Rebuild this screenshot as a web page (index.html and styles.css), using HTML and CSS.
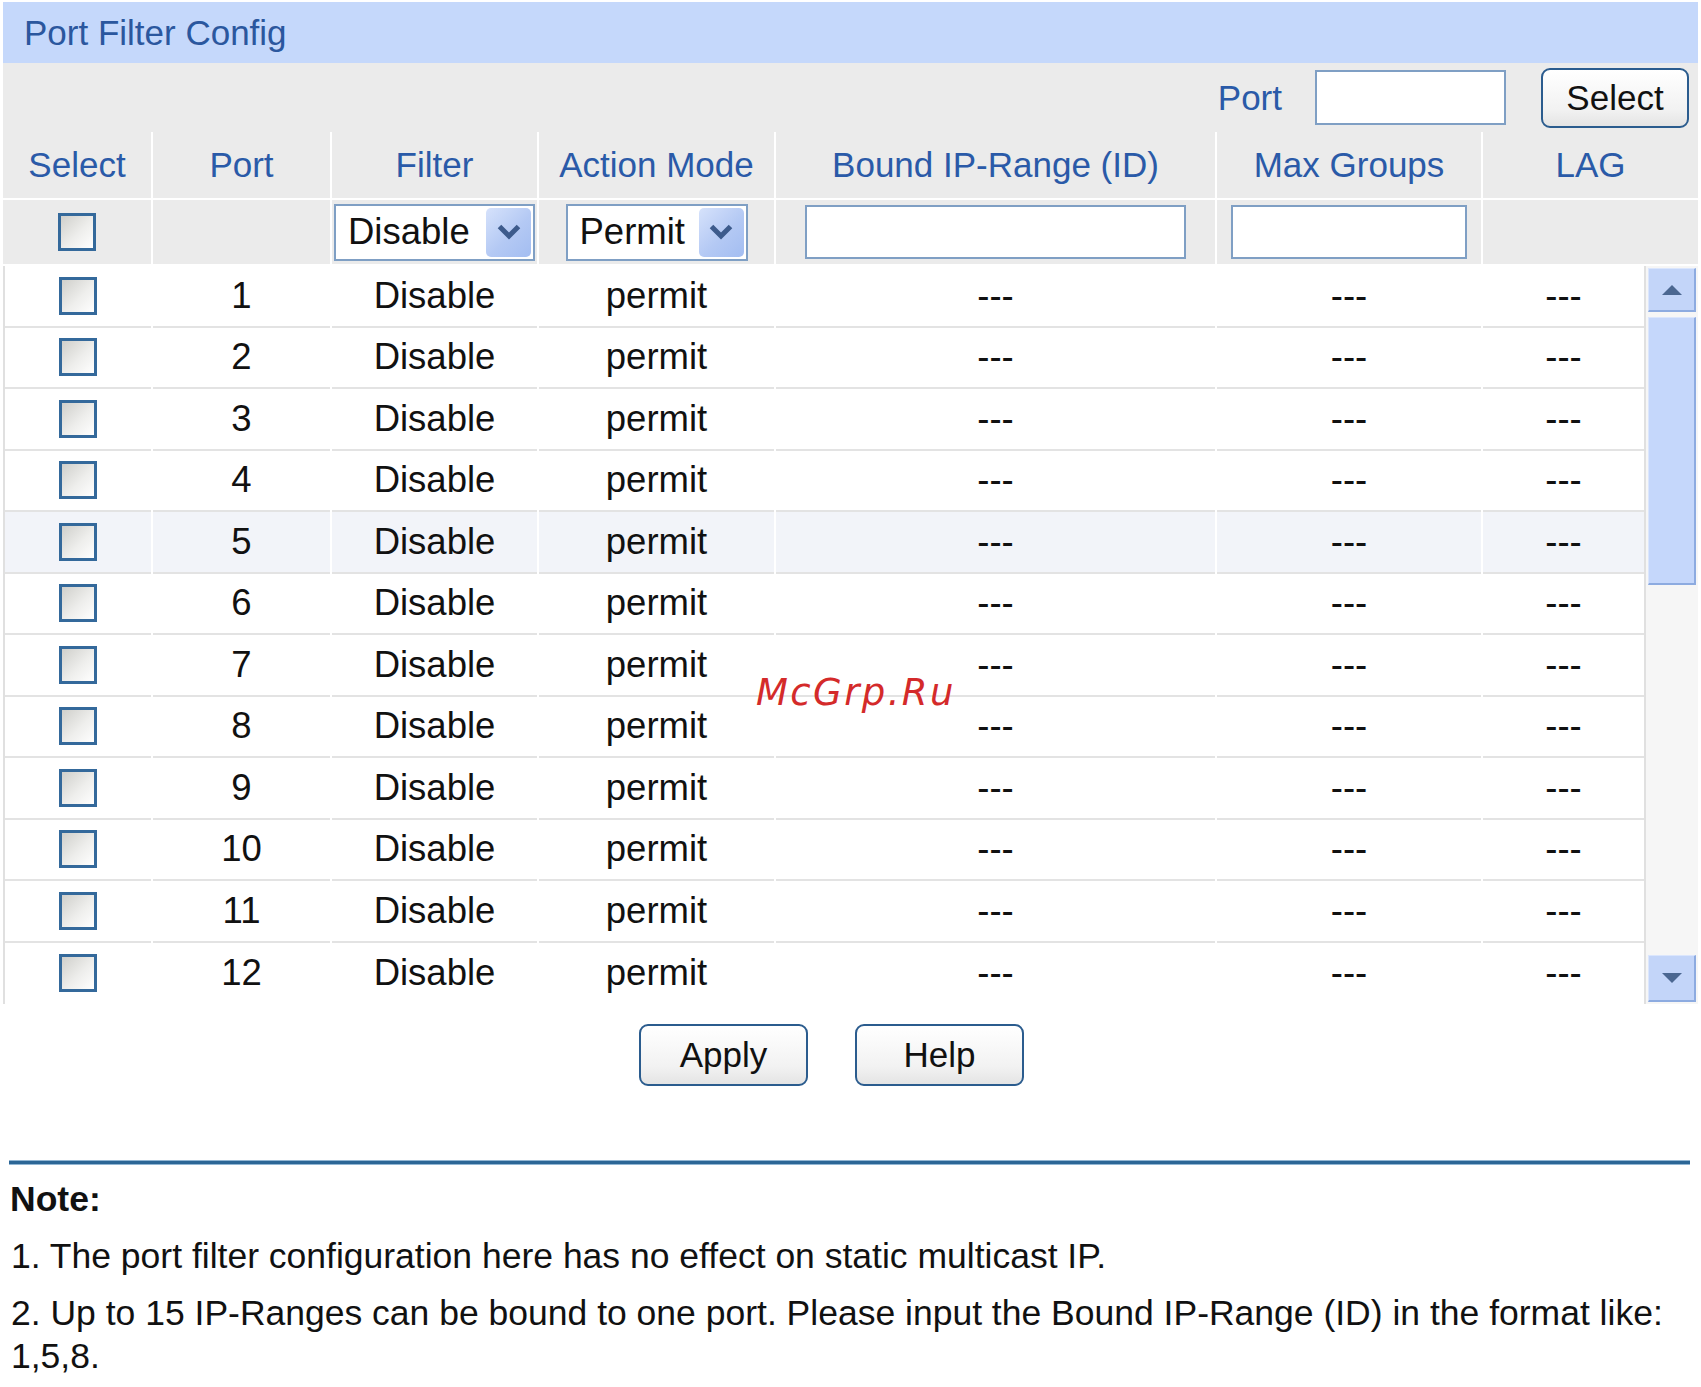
FILE: index.html
```html
<!DOCTYPE html>
<html lang="en">
<head>
<meta charset="utf-8">
<title>Port Filter Config</title>
<link rel="stylesheet" href="styles.css">
</head>
<body>
<div class="page">
  <div class="title">Port Filter Config</div>
  <div class="toolbar">
    <span class="tb-label">Port</span>
    <input class="tb-input" type="text">
    <button class="btn btn-select">Select</button>
  </div>

  <div class="head-grid">
    <div class="hc">Select</div>
    <div class="hc">Port</div>
    <div class="hc">Filter</div>
    <div class="hc">Action Mode</div>
    <div class="hc">Bound IP-Range (ID)</div>
    <div class="hc">Max Groups</div>
    <div class="hc">LAG</div>

    <div class="fc"><span class="cb"></span></div>
    <div class="fc"></div>
    <div class="fc"><div class="sel sel-filter"><span class="sel-text">Disable</span><span class="arrow"><svg width="26" height="18" viewBox="0 0 26 18"><path d="M3.5 3.5 L13 13 L22.5 3.5" fill="none" stroke="#3d5b8c" stroke-width="5"/></svg></span></div></div>
    <div class="fc"><div class="sel sel-action"><span class="sel-text">Permit</span><span class="arrow"><svg width="26" height="18" viewBox="0 0 26 18"><path d="M3.5 3.5 L13 13 L22.5 3.5" fill="none" stroke="#3d5b8c" stroke-width="5"/></svg></span></div></div>
    <div class="fc"><input class="fin fin-bound" type="text"></div>
    <div class="fc"><input class="fin fin-max" type="text"></div>
    <div class="fc"></div>
  </div>

  <div class="data">
    <div class="rows">
      <div class="row"><div class="c"><span class="cb"></span></div><div class="c">1</div><div class="c">Disable</div><div class="c">permit</div><div class="c">---</div><div class="c">---</div><div class="c">---</div></div>
      <div class="row"><div class="c"><span class="cb"></span></div><div class="c">2</div><div class="c">Disable</div><div class="c">permit</div><div class="c">---</div><div class="c">---</div><div class="c">---</div></div>
      <div class="row"><div class="c"><span class="cb"></span></div><div class="c">3</div><div class="c">Disable</div><div class="c">permit</div><div class="c">---</div><div class="c">---</div><div class="c">---</div></div>
      <div class="row"><div class="c"><span class="cb"></span></div><div class="c">4</div><div class="c">Disable</div><div class="c">permit</div><div class="c">---</div><div class="c">---</div><div class="c">---</div></div>
      <div class="row row-hover"><div class="c"><span class="cb"></span></div><div class="c">5</div><div class="c">Disable</div><div class="c">permit</div><div class="c">---</div><div class="c">---</div><div class="c">---</div></div>
      <div class="row"><div class="c"><span class="cb"></span></div><div class="c">6</div><div class="c">Disable</div><div class="c">permit</div><div class="c">---</div><div class="c">---</div><div class="c">---</div></div>
      <div class="row"><div class="c"><span class="cb"></span></div><div class="c">7</div><div class="c">Disable</div><div class="c">permit</div><div class="c">---</div><div class="c">---</div><div class="c">---</div></div>
      <div class="row"><div class="c"><span class="cb"></span></div><div class="c">8</div><div class="c">Disable</div><div class="c">permit</div><div class="c">---</div><div class="c">---</div><div class="c">---</div></div>
      <div class="row"><div class="c"><span class="cb"></span></div><div class="c">9</div><div class="c">Disable</div><div class="c">permit</div><div class="c">---</div><div class="c">---</div><div class="c">---</div></div>
      <div class="row"><div class="c"><span class="cb"></span></div><div class="c">10</div><div class="c">Disable</div><div class="c">permit</div><div class="c">---</div><div class="c">---</div><div class="c">---</div></div>
      <div class="row"><div class="c"><span class="cb"></span></div><div class="c">11</div><div class="c">Disable</div><div class="c">permit</div><div class="c">---</div><div class="c">---</div><div class="c">---</div></div>
      <div class="row row-last"><div class="c"><span class="cb"></span></div><div class="c">12</div><div class="c">Disable</div><div class="c">permit</div><div class="c">---</div><div class="c">---</div><div class="c">---</div></div>
    </div>
    <div class="scroll">
      <div class="sb-btn"><span class="tri-up"></span></div>
      <div class="sb-thumb"></div>
      <div class="sb-track"></div>
      <div class="sb-btn sb-down"><span class="tri-down"></span></div>
    </div>
  </div>

  <div class="actions">
    <button class="btn btn-act">Apply</button>
    <button class="btn btn-act">Help</button>
  </div>

  <div class="rule"></div>

  <div class="note">
    <div class="note-title">Note:</div>
    <p>1. The port filter configuration here has no effect on static multicast IP.</p>
    <p>2. Up to 15 IP-Ranges can be bound to one port. Please input the Bound IP-Range (ID) in the format like: 1,5,8.</p>
  </div>
</div>
<div class="watermark">McGrp.Ru</div>
</body>
</html>
```

FILE: styles.css
```css
html, body {
  margin: 0;
  padding: 0;
  background: #ffffff;
}

body {
  position: relative;
  width: 1701px;
  height: 1387px;
  overflow: hidden;
  font-family: "Liberation Sans", Arial, sans-serif;
  color: #111111;
}

.page {
  padding: 2px 3px 0 3px;
}

.title {
  height: 61px;
  line-height: 61px;
  background: #c5d8fb;
  color: #2b579e;
  font-size: 35px;
  padding-left: 21px;
}

.toolbar {
  height: 69px;
  background: #ebebeb;
  display: flex;
  align-items: center;
  justify-content: flex-end;
  padding-right: 9px;
}

.tb-label {
  color: #2a5aa8;
  font-size: 35px;
  margin-right: 33px;
}

.tb-input {
  box-sizing: border-box;
  width: 191px;
  height: 55px;
  border: 2px solid #7f9fc4;
  background: #ffffff;
  margin: 0 35px 0 0;
  padding: 0;
}

.btn {
  box-sizing: border-box;
  font-family: "Liberation Sans", Arial, sans-serif;
  font-size: 35px;
  color: #111111;
  background: linear-gradient(#ffffff, #f2f2f2 70%, #e4e4e4);
  border: 2px solid #2b5c8e;
  border-radius: 9px;
  padding: 0;
  margin: 0;
}

.btn-select {
  width: 148px;
  height: 60px;
}

.head-grid {
  display: grid;
  grid-template-columns: 148px 177px 205px 235px 439px 264px 215px;
  grid-template-rows: 66px 64px;
  column-gap: 2px;
  row-gap: 2px;
  background: #ffffff;
}

.hc, .fc {
  background: #ebebeb;
  display: flex;
  align-items: center;
  justify-content: center;
}

.hc {
  color: #2a5aa8;
  font-size: 35px;
}

.cb {
  box-sizing: border-box;
  display: block;
  width: 38px;
  height: 38px;
  border: 3px solid #34699b;
  background: linear-gradient(135deg, #cfcfcb, #eeeeec 55%, #ffffff);
}

.sel {
  box-sizing: border-box;
  height: 57px;
  border: 2px solid #7f9fc4;
  background: #ffffff;
  display: flex;
  align-items: center;
  justify-content: space-between;
  padding-left: 12px;
  padding-right: 2px;
  font-size: 36.5px;
  color: #111111;
}

.sel-filter { width: 201px; }
.sel-action { width: 182px; }

.arrow {
  box-sizing: border-box;
  width: 45px;
  height: 49px;
  border-radius: 5px;
  background: linear-gradient(135deg, #d6e2fb, #b4c9f4 55%, #a3bdf1);
  display: flex;
  align-items: center;
  justify-content: center;
}

.arrow svg { display: block; }

.fin {
  box-sizing: border-box;
  height: 54px;
  border: 2px solid #7f9fc4;
  background: #ffffff;
  padding: 0;
  margin: 0;
}

.fin-bound { width: 381px; }
.fin-max { width: 236px; }

.data {
  display: flex;
  margin-top: 2px;
}

.rows {
  box-sizing: border-box;
  width: 1643px;
  border-left: 2px solid #e0e0e0;
  border-right: 2px solid #e0e0e0;
}

.row {
  display: grid;
  grid-template-columns: 146px 177px 205px 235px 439px 264px 161px;
  column-gap: 2px;
  height: 61.5px;
}

.c {
  box-sizing: border-box;
  border-bottom: 2px solid #e3e3e3;
  display: flex;
  align-items: center;
  justify-content: center;
  font-size: 36.5px;
  color: #111111;
}

.row-last .c {
  border-bottom: none;
}

.row-hover .c {
  background: #f2f4f9;
}

.scroll {
  box-sizing: border-box;
  width: 52px;
  height: 738px;
  background: #f6f6f6;
  display: flex;
  flex-direction: column;
  padding: 2px 2px 2px 2px;
}

.sb-btn {
  box-sizing: border-box;
  height: 44px;
  background: #c3d5f9;
  border-top: 1px solid #dbe6fd;
  border-left: 1px solid #dbe6fd;
  border-right: 2px solid #8dabe0;
  border-bottom: 2px solid #8dabe0;
  display: flex;
  align-items: center;
  justify-content: center;
}

.sb-down {
  height: 47px;
}

.tri-up {
  width: 0;
  height: 0;
  border-left: 10px solid transparent;
  border-right: 10px solid transparent;
  border-bottom: 10px solid #4b6791;
}

.tri-down {
  width: 0;
  height: 0;
  border-left: 10px solid transparent;
  border-right: 10px solid transparent;
  border-top: 10px solid #4b6791;
}

.sb-thumb {
  box-sizing: border-box;
  height: 268px;
  margin-top: 5px;
  background: #c5d7fb;
  border-top: 1px solid #dbe6fd;
  border-left: 1px solid #dbe6fd;
  border-right: 2px solid #8dabe0;
  border-bottom: 2px solid #8dabe0;
}

.sb-track {
  flex: 1;
}

.actions {
  display: flex;
  justify-content: center;
  gap: 47px;
  margin-top: 20px;
  padding-right: 38px;
}

.btn-act {
  width: 169px;
  height: 62px;
}

.rule {
  margin: 74px 8px 0 6px;
  height: 3px;
  background: #2c6696;
  border-top: 1px solid #92b6d3;
  border-bottom: 1px solid #92b6d3;
}

.note {
  padding-left: 8px;
  margin-top: 13px;
  font-size: 35.5px;
  line-height: 43px;
  color: #111111;
}

.note-title {
  font-weight: bold;
  margin-left: -1px;
}

.note p {
  margin: 14px 0 0 0;
}

.watermark {
  position: absolute;
  left: 756px;
  top: 671px;
  font-family: "DejaVu Sans", sans-serif;
  font-style: italic;
  font-size: 37px;
  letter-spacing: 2.4px;
  line-height: 44px;
  color: #d42a2a;
}
```
